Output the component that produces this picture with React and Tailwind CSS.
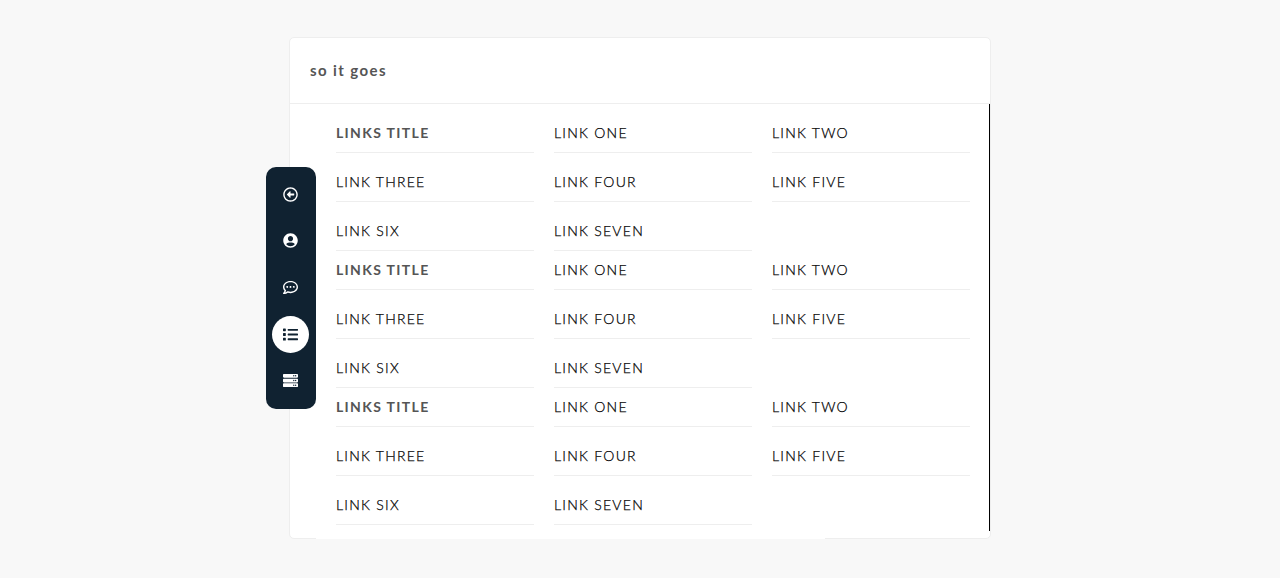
import React from "react";
import {
  FaRegArrowAltCircleLeft,
  FaUserCircle,
  FaRegCommentDots,
  FaList,
  FaServer,
} from "react-icons/fa";

const links = ["LINKS TITLE", "LINK ONE", "LINK TWO", "LINK THREE", "LINK FOUR", "LINK FIVE", "LINK SIX", "LINK SEVEN"];

function LinkBlock() {
  return (
    <ul className="grid grid-cols-[198px_198px_198px] gap-x-5 gap-y-[10px]">
      {links.map((label, i) => (
        <li
          key={label}
          className={`h-[39px] border-b border-[#eeeeee] pt-[9px] text-[14px] leading-[20px] ${
            i === 0
              ? "font-bold tracking-[1.35px] text-[#555555]"
              : "font-light tracking-[1.25px] text-black [-webkit-text-stroke:0.25px_#000]"
          }`}
        >
          {label}
        </li>
      ))}
    </ul>
  );
}

function SideBar() {
  return (
    <nav className="absolute left-[-24px] top-[129px] flex h-[242px] w-[50px] flex-col items-start rounded-[10px] bg-[#102231] pl-[6px] pt-[9px] text-white">
      <a className="flex h-[37px] w-[37px] items-center justify-center text-[15px]"><FaRegArrowAltCircleLeft /></a>
      <a className="mt-[9px] flex h-[37px] w-[37px] items-center justify-center text-[15px]"><FaUserCircle /></a>
      <a className="mt-[10px] flex h-[37px] w-[37px] items-center justify-center text-[15px]"><FaRegCommentDots /></a>
      <a className="mt-[10px] flex h-[37px] w-[37px] items-center justify-center rounded-full bg-white text-[15px] text-[#102231]"><FaList /></a>
      <a className="mt-[9px] flex h-[37px] w-[37px] items-center justify-center text-[15px]"><FaServer /></a>
    </nav>
  );
}

export default function App() {
  return (
    <div className="flex h-[578px] justify-center overflow-hidden bg-[#f8f8f8] pt-[37px] font-['Lato',sans-serif]">
      <div className="relative h-[502px] w-[702px] rounded-[5px] border border-[#eeeeee] bg-white">
        <header className="flex h-[66px] items-center border-b border-[#eeeeee] pl-5 text-[15px] font-bold tracking-[1.4px] text-[#555555]">
          so it goes
        </header>
        <div className="h-[427px] border-r border-black pl-[46px] pt-[10px]">
          <LinkBlock />
          <LinkBlock />
          <LinkBlock />
        </div>
        <SideBar />
        <div className="absolute bottom-[-1px] left-[26px] h-[8px] w-[509px] bg-white" />
      </div>
    </div>
  );
}
